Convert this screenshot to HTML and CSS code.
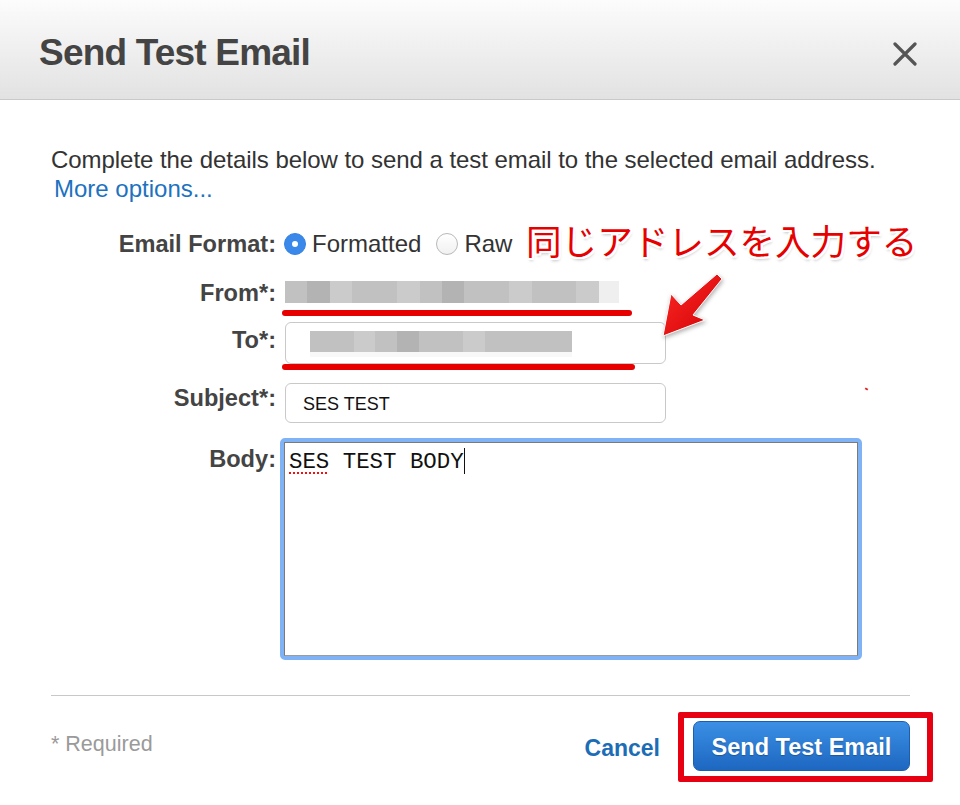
FILE: index.html
```html
<!DOCTYPE html>
<html lang="en">
<head>
    <meta charset="UTF-8">
    <title>Send Test Email</title>
    <link rel="stylesheet" href="styles.css">
</head>
<body>
<div class="dialog">
    <div class="dialog-header">
        <h1 class="dialog-title">Send Test Email</h1>
        <svg class="close-icon" width="26" height="24" viewBox="0 0 26 24">
            <path d="M3 2 L23 22 M23 2 L3 22" stroke="#555" stroke-width="3.2" stroke-linecap="round"/>
        </svg>
    </div>

    <div class="dialog-body">
        <p class="intro">Complete the details below to send a test email to the selected email address.</p>
        <p class="more"><a href="#">More options...</a></p>

        <div class="row row-format">
            <div class="label">Email Format:</div>
            <div class="radios">
                <span class="radio checked"></span><span class="radio-text">Formatted</span>
                <span class="radio"></span><span class="radio-text">Raw</span>
            </div>
        </div>

        <div class="row row-from">
            <div class="label">From*:</div>
            <div class="blur blur-from">
                <span class="g2"></span><span class="g1"></span><span class="g3"></span><span class="g2"></span>
                <span class="g2"></span><span class="g3"></span><span class="g2"></span><span class="g1"></span>
                <span class="g2"></span><span class="g2"></span><span class="g3"></span><span class="g2"></span>
                <span class="g2"></span><span class="g3"></span><span class="g4"></span>
            </div>
        </div>

        <div class="row row-to">
            <div class="label">To*:</div>
            <div class="input">
                <div class="blur blur-to">
                    <span class="g2"></span><span class="g2"></span><span class="g3"></span><span class="g2"></span>
                    <span class="g1"></span><span class="g2"></span><span class="g2"></span><span class="g3"></span>
                    <span class="g2"></span><span class="g2"></span><span class="g2"></span><span class="g2"></span>
                </div>
            </div>
        </div>

        <div class="row row-subject">
            <div class="label">Subject*:</div>
            <div class="input"><span class="input-text">SES TEST</span></div>
        </div>

        <div class="row row-body">
            <div class="label">Body:</div>
            <div class="textarea-ring">
                <div class="textarea"><span class="typo">SES</span> TEST BODY<span class="caret"></span></div>
            </div>
        </div>

        <div class="divider"></div>

        <div class="footer">
            <span class="required">* Required</span>
            <div class="actions">
                <a href="#" class="cancel">Cancel</a>
                <div class="highlight">
                    <button class="primary">Send Test Email</button>
                </div>
            </div>
        </div>
    </div>

    <!-- annotations drawn over the screenshot -->
    <div class="note">同じアドレスを入力する</div>
    <div class="underline underline-from"></div>
    <div class="underline underline-to"></div>
    <div class="speck"></div>
    <svg class="arrow" width="80" height="80" viewBox="0 0 80 80">
        <defs>
            <linearGradient id="arrowFill" x1="0" y1="0" x2="1" y2="1">
                <stop offset="0" stop-color="#ff2a2a"/>
                <stop offset="1" stop-color="#d00000"/>
            </linearGradient>
        </defs>
        <polygon points="13,71 21,29 31,40 67,9 72,14 43,50 55,55" fill="url(#arrowFill)" stroke="#fff" stroke-width="1" stroke-linejoin="round"/>
    </svg>
</div>
</body>
</html>
```

FILE: styles.css
```css
html, body {
    margin: 0;
    padding: 0;
}
body {
    width: 960px;
    height: 805px;
    overflow: hidden;
    background: #fff;
    font-family: "Liberation Sans", Arial, sans-serif;
    color: #333;
}
.dialog {
    position: relative;
    height: 805px;
}
.dialog-header {
    height: 99px;
    border-bottom: 1px solid #c9c9c9;
    background: linear-gradient(#fcfcfc, #e2e2e2);
    display: flex;
    align-items: center;
    justify-content: space-between;
    padding: 0 42px 0 39px;
}
.dialog-title {
    margin: 6px 0 0;
    font-size: 37px;
    font-weight: bold;
    letter-spacing: -0.8px;
    color: #444;
}
.close-icon {
    display: block;
    margin-top: 8px;
}
.dialog-body {
    padding: 45px 50px 0 51px;
}
.intro {
    margin: 0;
    font-size: 24px;
    line-height: 29px;
    letter-spacing: -0.05px;
}
.more {
    margin: 0;
    padding-left: 3px;
    font-size: 24px;
    line-height: 29px;
}
.more a {
    color: #1d72bf;
    text-decoration: none;
}
.row {
    display: flex;
    align-items: flex-start;
}
.label {
    width: 225px;
    flex: none;
    text-align: right;
    font-size: 23.6px;
    line-height: 24px;
    font-weight: bold;
    color: #444;
    margin-right: 8px;
}
.row-format {
    margin-top: 26px;
    align-items: center;
    height: 30px;
}
.radios {
    display: flex;
    align-items: center;
}
.radio {
    width: 22px;
    height: 22px;
    box-sizing: border-box;
    border-radius: 50%;
    border: 1px solid #b9b9b9;
    background: linear-gradient(#fff, #f1f1f1);
    margin-right: 6px;
    position: relative;
}
.radio.checked {
    border-color: #3583e6;
    background: #3a88ea;
}
.radio.checked::after {
    content: "";
    position: absolute;
    left: 7px;
    top: 7px;
    width: 6px;
    height: 6px;
    border-radius: 50%;
    background: #fff;
}
.radio-text {
    font-size: 24px;
    color: #333;
    margin-right: 15px;
}
.row-from {
    margin-top: 22px;
    height: 22px;
    align-items: center;
}
.row-from .label {
    margin-top: 1px;
}
.blur {
    display: flex;
    height: 22px;
}
.blur span {
    flex: 1;
}
.blur-from {
    width: 334px;
    margin-left: 1px;
}
.blur-from span:last-child {
    flex: 0 0 20px;
}
.blur-to {
    width: 262px;
    height: 21px;
    margin: 8px 0 0 24px;
    box-shadow: 0 5px 0 #f8f8f8;
}
.g1 { background: #b3b3b3; }
.g2 { background: #c1c1c1; }
.g3 { background: #cbcbcb; }
.g4 { background: #efefef; }
.input {
    width: 381px;
    box-sizing: border-box;
    border: 1px solid #c9c9c9;
    border-radius: 6px;
    margin-left: 1px;
    background: #fff;
}
.row-to {
    margin-top: 19px;
}
.row-to .input {
    height: 42px;
}
.row-to .label {
    padding-top: 6px;
}
.row-subject {
    margin-top: 19px;
}
.row-subject .input {
    height: 40px;
    display: flex;
    align-items: center;
    padding-left: 17px;
}
.row-subject .label {
    padding-top: 3px;
}
.input-text {
    font-size: 18px;
    color: #111;
    padding-top: 2px;
}
.row-body {
    margin-top: 15px;
}
.row-body .label {
    padding-top: 9px;
}
.textarea-ring {
    margin-left: -4px;
    border: 4px solid #80b3f5;
    border-radius: 5px;
}
.textarea {
    width: 574px;
    height: 214px;
    box-sizing: border-box;
    border: 1px solid #7a7a7a;
    border-bottom-color: #9c9c9c;
    background: #fff;
    padding: 5px 0 0 4px;
    font-family: "Liberation Mono", "DejaVu Sans Mono", monospace;
    font-size: 22.4px;
    line-height: 28px;
    color: #111;
    white-space: pre;
}
.typo {
    text-decoration: underline dotted #e11;
    text-decoration-thickness: 2px;
    text-underline-offset: 4px;
}
.caret {
    display: inline-block;
    width: 1.5px;
    height: 26px;
    background: #111;
    vertical-align: -6px;
}
.divider {
    margin-top: 35px;
    height: 1px;
    border-top: 1px solid #c8c8c8;
}
.footer {
    display: flex;
    align-items: center;
    justify-content: space-between;
    margin-top: 15px;
}
.required {
    font-size: 21.5px;
    color: #9a9a9a;
    margin-top: -5px;
}
.actions {
    display: flex;
    align-items: center;
    margin-right: -23px;
}
.cancel {
    font-size: 23px;
    font-weight: bold;
    color: #1c6db6;
    text-decoration: none;
    margin-right: 18px;
    margin-top: 2px;
}
.highlight {
    border: 6px solid #e60012;
    border-radius: 2px;
    padding: 3px 17px 5px 9px;
}
.primary {
    display: block;
    width: 217px;
    height: 50px;
    border: 1px solid #1c5fae;
    border-radius: 7px;
    background: linear-gradient(#3b8fe5, #1d67c1);
    color: #fff;
    font-family: "Liberation Sans", Arial, sans-serif;
    font-size: 23.5px;
    font-weight: bold;
    text-shadow: 0 1px 1px rgba(0, 0, 0, 0.25);
    padding: 3px 0 0;
}
.note {
    position: absolute;
    left: 526px;
    top: 220px;
    font-family: "Noto Sans CJK JP", sans-serif;
    font-size: 35.6px;
    font-weight: 400;
    line-height: 40px;
    color: #e60000;
    text-shadow:
        2px 0 0 #fff, -2px 0 0 #fff, 0 2px 0 #fff, 0 -2px 0 #fff,
        2px 2px 0 #fff, -2px -2px 0 #fff, 2px -2px 0 #fff, -2px 2px 0 #fff,
        1px 3px 3px rgba(0, 0, 0, 0.25);
}
.underline {
    position: absolute;
    height: 6px;
    border-radius: 3px;
    background: #e60000;
}
.underline-from {
    left: 282px;
    top: 310px;
    width: 350px;
}
.underline-to {
    left: 282px;
    top: 364px;
    width: 353px;
}
.speck {
    position: absolute;
    left: 865px;
    top: 388px;
    width: 3px;
    height: 2px;
    background: #d22;
    transform: rotate(30deg);
}
.arrow {
    position: absolute;
    left: 650px;
    top: 265px;
    filter: drop-shadow(1px 2px 2px rgba(0, 0, 0, 0.3));
}
```
